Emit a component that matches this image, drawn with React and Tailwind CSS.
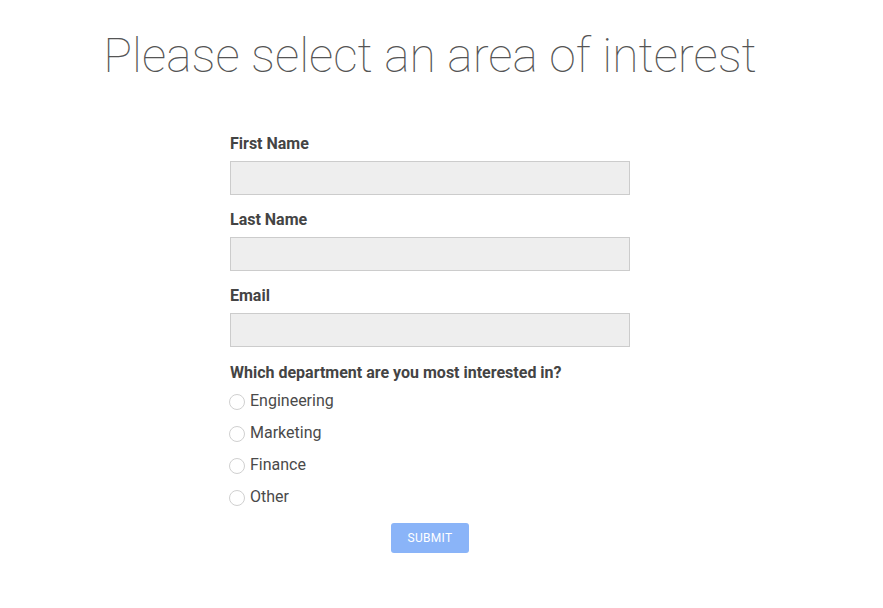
import React from "react";

const fields = ["First Name", "Last Name", "Email"];
const options = ["Engineering", "Marketing", "Finance", "Other"];

export default function App() {
  return (
    <div className="w-[860px] pt-[26px] text-[#444] font-['Roboto',sans-serif]">
      <h1 className="text-center text-[48px] font-thin leading-[60px] text-[#555]">
        Please select an area of interest
      </h1>

      <form className="w-[400px] mx-auto mt-[48px] flex flex-col">
        {fields.map((f) => (
          <div key={f} className="mb-[15px]">
            <label className="block text-[16px] font-bold leading-[19px] mb-[8px]">{f}</label>
            <input
              type="text"
              className="block w-[400px] h-[34px] bg-[#eeeeee] border border-[#cccccc] outline-none"
            />
          </div>
        ))}

        <div className="text-[16px] font-bold leading-[19px] mt-[1px]">
          Which department are you most interested in?
        </div>
        <div className="flex flex-col mt-[3px]">
          {options.map((o) => (
            <label key={o} className="flex items-center h-[32px] text-[16px] text-[#4a4a4a]">
              <span className="w-[16px] h-[16px] -ml-[1px] rounded-full border border-[#d0d0d0] bg-white mt-[1px]" />
              <span className="ml-[5px]">{o}</span>
            </label>
          ))}
        </div>

        <div className="flex justify-center mt-[10px]">
          <button
            type="button"
            className="w-[78px] h-[30px] rounded-[3px] bg-[#8ab4f8] text-white text-[12px] uppercase tracking-[0.3px]"
          >
            Submit
          </button>
        </div>
      </form>
    </div>
  );
}
